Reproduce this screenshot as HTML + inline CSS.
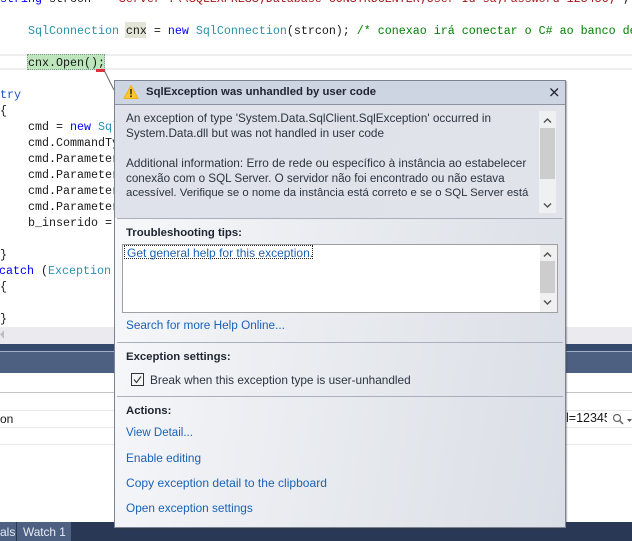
<!DOCTYPE html>
<html><head><meta charset="utf-8">
<style>
html,body{margin:0;padding:0;background:#fff}
#r{position:relative;width:632px;height:541px;overflow:hidden;background:#fff;font-family:"Liberation Sans",sans-serif}
.a{position:absolute}
.c{position:absolute;font:11.67px/16px "Liberation Mono",monospace;color:#1a1a1a;white-space:pre}
.k{color:#0000ff}.t{color:#2b91af}.s{color:#a31515}.g{color:#008000}
.d{position:absolute;font-size:11.76px;line-height:15px;color:#2c3440;white-space:pre}
.b{font-weight:bold;color:#1e2530;font-size:11.35px}
.l{color:#1a62b8;font-size:12px}
.h{position:absolute;background:#a9afbb;height:1px}
</style></head><body><div id="r">

<div class="c" style="left:0;top:-9px"><span class="k">string</span> strcon = <span class="s">"Server=.\\SQLEXPRESS;Database=CONSTRUCENTER;User Id=sa;Password=123456;"</span>;</div>
<div class="a" style="left:125px;top:22px;width:21px;height:16px;background:#e3e5d6"></div>
<div class="c" style="left:28px;top:23px"><span class="t">SqlConnection</span> cnx = <span class="k">new</span> <span class="t">SqlConnection</span>(strcon); <span class="g">/* conexao irá conectar o C# ao banco de dados */</span></div>

<div class="a" style="left:0;top:54px;width:632px;height:2px;background:#eeeeee"></div>
<div class="a" style="left:0;top:68px;width:632px;height:2px;background:#eeeeee"></div>
<div class="a" style="left:27px;top:54px;width:78px;height:16px;background:#bde6bd;outline:1px dotted #7d9a88;outline-offset:-1px"></div>
<div class="c" style="left:28px;top:55px">cnx.Open();</div>
<div class="a" style="left:96px;top:69px;width:9px;height:3px;background:#e0303c"></div>
<svg class="a" style="left:100px;top:70px" width="20" height="22"><path d="M4.500 1L14 20" stroke="#666" fill="none"/></svg>

<div class="c" style="left:0;top:87px"><span style="color:#1f4fc8">try</span></div>
<div class="c" style="left:0;top:103px">{</div>
<div class="c" style="left:28px;top:119px">cmd = <span class="k">new</span> <span class="t">SqlCommand</span></div>
<div class="c" style="left:28px;top:135px">cmd.CommandType</div>
<div class="c" style="left:28px;top:151px">cmd.Parameters</div>
<div class="c" style="left:28px;top:167px">cmd.Parameters</div>
<div class="c" style="left:28px;top:183px">cmd.Parameters</div>
<div class="c" style="left:28px;top:199px">cmd.Parameters</div>
<div class="c" style="left:28px;top:215px">b_inserido = </div>
<div class="c" style="left:0;top:247px">}</div>
<div class="c" style="left:-1px;top:263px"><span class="k">catch</span> (<span class="t">Exception</span></div>
<div class="c" style="left:0;top:279px">{</div>
<div class="c" style="left:0;top:311px">}</div>

<div class="a" style="left:0;top:327px;width:632px;height:17px;background:#ebebef"></div>
<svg class="a" style="left:0;top:330px" width="6" height="10"><path d="M4 0v9L0 4.500z" fill="#c0c0c4"/></svg>
<div class="a" style="left:0;top:344px;width:632px;height:7px;background:#364a6e"></div>
<div class="a" style="left:0;top:351px;width:632px;height:1px;background:#a4b0c8"></div>
<div class="a" style="left:0;top:352px;width:632px;height:21px;background:#4d6082"></div>
<div class="a" style="left:0;top:392px;width:632px;height:1px;background:#c4c4c8"></div>
<div class="a" style="left:0;top:410px;width:632px;height:1px;background:#e8e8e8"></div>
<div class="a" style="left:0;top:427px;width:632px;height:1px;background:#e8e8e8"></div>
<div class="a" style="left:0;top:444px;width:632px;height:1px;background:#e8e8e8"></div>
<div class="a" style="left:0;top:412px;font-size:12px;line-height:15px;color:#1a1a1a">on</div>
<div class="a" style="left:566px;top:411px;width:41px;overflow:hidden;font-size:12.500px;line-height:15px;color:#1a1a1a;white-space:pre">l=123456</div>
<svg class="a" style="left:612px;top:413px" width="20" height="14"><circle cx="5" cy="5" r="3.500" fill="none" stroke="#666" stroke-width="1.200"/><path d="M7.500 7.500L11 11" stroke="#666" stroke-width="1.500"/><path d="M15 6h5l-2.500 3z" fill="#555"/></svg>
<div class="a" style="left:0;top:522px;width:632px;height:19px;background:#293955"></div>
<div class="a" style="left:0;top:522px;width:16px;height:19px;background:#4d6082"></div>
<div class="a" style="left:17px;top:522px;width:54px;height:19px;background:#4d6082"></div>
<div class="a" style="left:0;top:525px;font-size:12px;line-height:15px;color:#e8edf5">als</div>
<div class="a" style="left:23px;top:525px;font-size:11.800px;line-height:15px;color:#e8edf5">Watch 1</div>

<div class="a" style="left:114px;top:80px;width:452px;height:448px;box-sizing:border-box;border:1px solid #7c8494;background:linear-gradient(100deg,#f8f9fb 0%,#eef0f4 30%,#e4e7ec 65%,#dadee6 100%);box-shadow:1px 1px 1px rgba(60,60,60,.4)"></div>
<div class="a" style="left:115px;top:81px;width:450px;height:23px;background:#cdd4e2"></div>
<div class="a" style="left:115px;top:104px;width:450px;height:1px;background:#8c93a3"></div>
<div class="a" style="left:115px;top:105px;width:450px;height:113px;background:linear-gradient(100deg,#dfe2ea,#e0e3ea)"></div>
<svg class="a" style="left:123px;top:84px" width="16" height="16"><path d="M8 1.500L15 14.500H1z" fill="#ffc82e" stroke="#f0b010" stroke-linejoin="round"/><path d="M7.200 5h1.600l-.2 5.500h-1.200z" fill="#222"/><rect x="7.200" y="11.500" width="1.600" height="1.600" fill="#222"/></svg>
<div class="d b" style="left:146px;top:85px">SqlException was unhandled by user code</div>
<svg class="a" style="left:550px;top:88px" width="9" height="9"><path d="M.5 .5L8 8M8 .5L.5 8" stroke="#1e2530" stroke-width="1.300"/></svg>

<div class="d" style="left:126px;top:111px">An exception of type 'System.Data.SqlClient.SqlException' occurred in</div>
<div class="d" style="left:126px;top:126px">System.Data.dll but was not handled in user code</div>
<div class="d" style="left:126px;top:156px;font-size:11.85px">Additional information: Erro de rede ou específico à instância ao estabelecer</div>
<div class="d" style="left:126px;top:171px;font-size:11.67px">conexão com o SQL Server. O servidor não foi encontrado ou não estava</div>
<div class="d" style="left:126px;top:186px;font-size:11.39px">acessível. Verifique se o nome da instância está correto e se o SQL Server está</div>

<div class="a" style="left:539px;top:111px;width:17px;height:102px;background:#eff0f2"></div>
<div class="a" style="left:540px;top:128px;width:15px;height:51px;background:#cdcdcd"></div>
<svg class="a" style="left:543px;top:117px" width="9" height="7"><path d="M1 5.500L4.500 2L8 5.500" fill="none" stroke="#555" stroke-width="1.500"/></svg>
<svg class="a" style="left:543px;top:202px" width="9" height="7"><path d="M1 1.500L4.500 5L8 1.500" fill="none" stroke="#555" stroke-width="1.500"/></svg>

<div class="h" style="left:117px;top:218px;width:446px"></div>
<div class="d b" style="left:126px;top:226px">Troubleshooting tips:</div>
<div class="a" style="left:122px;top:244px;width:436px;height:69px;box-sizing:border-box;border:1px solid #a0a0a0;background:#fff"></div>
<div class="a" style="left:540px;top:245px;width:17px;height:67px;background:#f0f0f0"></div>
<div class="a" style="left:540px;top:261px;width:15px;height:32px;background:#cdcdcd"></div>
<svg class="a" style="left:543px;top:251px" width="9" height="7"><path d="M1 5.500L4.500 2L8 5.500" fill="none" stroke="#555" stroke-width="1.500"/></svg>
<svg class="a" style="left:543px;top:299px" width="9" height="7"><path d="M1 1.500L4.500 5L8 1.500" fill="none" stroke="#555" stroke-width="1.500"/></svg>
<div class="a" style="left:124px;top:245px;width:189px;height:14px;box-sizing:border-box;outline:1px dotted #222;outline-offset:-1px"></div>
<div class="d l" style="left:127px;top:246px">Get general help for this exception.</div>
<div class="d l" style="left:126px;top:318px;font-size:11.78px">Search for more Help Online...</div>

<div class="h" style="left:117px;top:342px;width:446px"></div>
<div class="d b" style="left:126px;top:350px">Exception settings:</div>
<div class="a" style="left:131px;top:373px;width:13px;height:13px;box-sizing:border-box;border:1px solid #333;background:#f4f5f7"></div>
<svg class="a" style="left:131px;top:373px" width="13" height="13"><path d="M3 6.500L5.500 9.500L10 3.500" fill="none" stroke="#333" stroke-width="1.100"/></svg>
<div class="d" style="left:150px;top:373px;font-size:11.82px">Break when this exception type is user-unhandled</div>

<div class="h" style="left:117px;top:396px;width:446px"></div>
<div class="d b" style="left:126px;top:404px">Actions:</div>
<div class="d l" style="left:126px;top:426px;font-size:11.5px">View Detail...</div>
<div class="d l" style="left:126px;top:451px;font-size:11.85px">Enable editing</div>
<div class="d l" style="left:126px;top:476px;font-size:12.05px">Copy exception detail to the clipboard</div>
<div class="d l" style="left:126px;top:501px;font-size:11.82px">Open exception settings</div>

</div></body></html>
